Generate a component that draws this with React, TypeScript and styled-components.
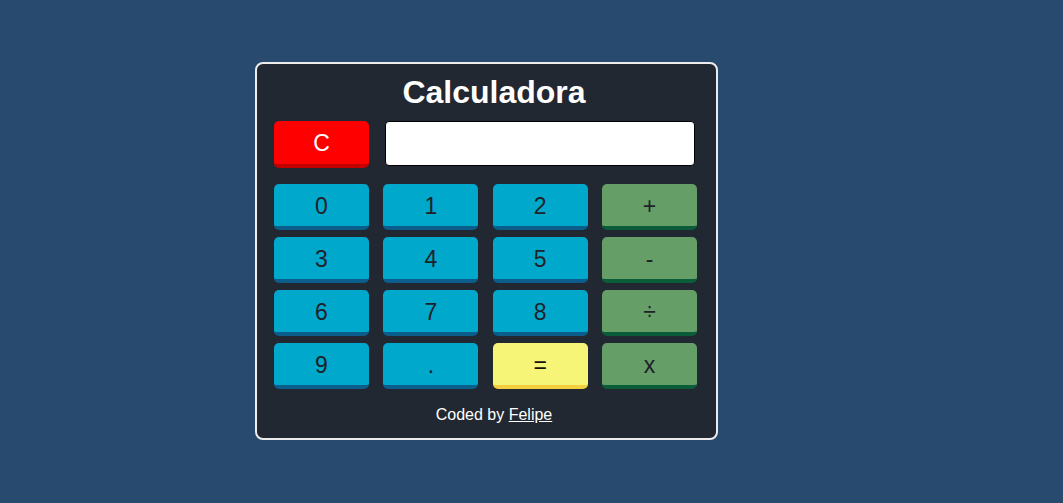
import React from "react";
import styled, { createGlobalStyle } from "styled-components";

const Global = createGlobalStyle`
  html, body { margin: 0; padding: 0; }
  body {
    background: #284a6e;
    font-family: "Liberation Sans", Arial, sans-serif;
    min-height: 503px;
  }
`;

const Page = styled.div`
  display: flex;
  justify-content: flex-start;
  padding: 62px 0 0 255px;
`;

const Card = styled.div`
  box-sizing: border-box;
  width: 463px;
  height: 378px;
  background: #222831;
  border: 2px solid #ececec;
  border-radius: 8px;
  padding: 10px 19px 0 17px;
  display: flex;
  flex-direction: column;
`;

const Title = styled.h1`
  margin: 0;
  padding-left: 17px;
  text-align: center;
  color: #ffffff;
  font-size: 32px;
  font-weight: bold;
  line-height: 37px;
`;

const TopRow = styled.div`
  display: flex;
  align-items: flex-start;
  gap: 16px;
  margin-top: 10px;
`;

type Variant = "num" | "op" | "eq" | "clear";

const palette: Record<Variant, { bg: string; shadow: string; fg: string }> = {
  num: { bg: "#00a8cc", shadow: "#0b5d8c", fg: "#1e2229" },
  op: { bg: "#659e67", shadow: "#0a5d38", fg: "#1e2229" },
  eq: { bg: "#f6f577", shadow: "#f3cf3f", fg: "#111111" },
  clear: { bg: "#ff0000", shadow: "#c20000", fg: "#ffffff" },
};

const Key = styled.button<{ $v: Variant }>`
  box-sizing: border-box;
  width: 95px;
  height: ${(p) => (p.$v === "clear" ? 47 : 46)}px;
  border: none;
  border-bottom: 4px solid ${(p) => palette[p.$v].shadow};
  border-radius: 5px;
  background: ${(p) => palette[p.$v].bg};
  color: ${(p) => palette[p.$v].fg};
  font-family: "Liberation Sans", Arial, sans-serif;
  font-size: 23px;
  padding: 2px 0 0;
  display: flex;
  align-items: center;
  justify-content: center;
  cursor: pointer;
`;

const Display = styled.input`
  box-sizing: border-box;
  width: 310px;
  height: 45px;
  background: #ffffff;
  border: 1px solid #000000;
  border-radius: 4px;
  font-size: 22px;
  padding: 0 8px;
  outline: none;
`;

const Grid = styled.div`
  display: grid;
  grid-template-columns: repeat(4, 95px);
  justify-content: space-between;
  row-gap: 7px;
  margin-top: 16px;
`;

const Footer = styled.p`
  margin: 17px 0 0;
  padding-left: 17px;
  text-align: center;
  color: #ffffff;
  font-size: 16px;
  line-height: 18px;
`;

const Link = styled.a`
  color: #ffffff;
  text-decoration: underline;
`;

const keys: { label: string; v: Variant }[] = [
  { label: "0", v: "num" },
  { label: "1", v: "num" },
  { label: "2", v: "num" },
  { label: "+", v: "op" },
  { label: "3", v: "num" },
  { label: "4", v: "num" },
  { label: "5", v: "num" },
  { label: "-", v: "op" },
  { label: "6", v: "num" },
  { label: "7", v: "num" },
  { label: "8", v: "num" },
  { label: "÷", v: "op" },
  { label: "9", v: "num" },
  { label: ".", v: "num" },
  { label: "=", v: "eq" },
  { label: "x", v: "op" },
];

export default function App() {
  return (
    <>
      <Global />
      <Page>
        <Card>
          <Title>Calculadora</Title>
          <TopRow>
            <Key $v="clear">C</Key>
            <Display type="text" readOnly value="" />
          </TopRow>
          <Grid>
            {keys.map((k) => (
              <Key key={k.label} $v={k.v}>
                {k.label}
              </Key>
            ))}
          </Grid>
          <Footer>
            Coded by <Link href="#">Felipe</Link>
          </Footer>
        </Card>
      </Page>
    </>
  );
}
